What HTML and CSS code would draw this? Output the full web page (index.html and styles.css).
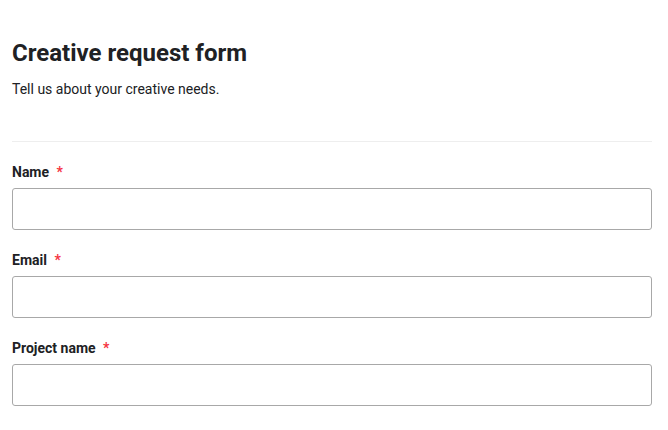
FILE: index.html
```html
<!DOCTYPE html>
<html>
<head>
<meta charset="utf-8">
<link rel="stylesheet" href="styles.css">
</head>
<body>
<div class="page">
  <header class="head">
    <h1 class="title">Creative request form</h1>
    <p class="subtitle">Tell us about your creative needs.</p>
  </header>
  <hr class="divider">
  <form class="form">
    <div class="field">
      <label class="label">Name <span class="req">*</span></label>
      <input class="input" type="text">
    </div>
    <div class="field">
      <label class="label">Email <span class="req">*</span></label>
      <input class="input" type="text">
    </div>
    <div class="field">
      <label class="label">Project name <span class="req">*</span></label>
      <input class="input" type="text">
    </div>
  </form>
</div>
</body>
</html>
```

FILE: styles.css
```css
html, body {
  margin: 0;
  padding: 0;
  background: #ffffff;
}
body {
  font-family: Roboto, "Liberation Sans", sans-serif;
  color: #202124;
}
.page {
  padding: 37px 16px 0 12px;
}
.head {
  display: flex;
  flex-direction: column;
  gap: 10px;
}
.title {
  margin: 0;
  font-size: 24px;
  line-height: 32px;
  font-weight: 700;
  color: #202124;
}
.subtitle {
  margin: 0;
  font-size: 14px;
  line-height: 20px;
  color: #202124;
}
.divider {
  margin: 42px 0 0 0;
  border: 0;
  border-top: 1px solid #eeeeee;
  height: 0;
}
.form {
  display: flex;
  flex-direction: column;
  gap: 20px;
  padding-top: 20px;
}
.field {
  display: flex;
  flex-direction: column;
  gap: 6px;
}
.label {
  font-size: 14px;
  line-height: 20px;
  font-weight: 700;
  color: #202124;
}
.req {
  color: #f5333f;
  font-weight: 700;
  margin-left: 4px;
}
.input {
  box-sizing: border-box;
  width: 100%;
  height: 42px;
  margin: 0;
  border: 1px solid #a8a8a8;
  border-radius: 3px;
  background: #fff;
  font-family: inherit;
  font-size: 14px;
}
```
